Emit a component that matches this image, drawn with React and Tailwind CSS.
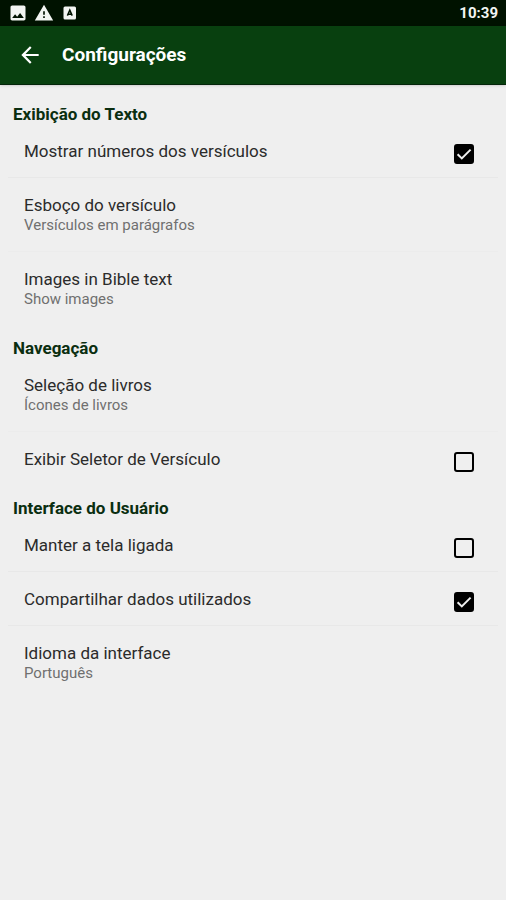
import React, { useState } from 'react';
import { MdImage, MdWarning, MdArrowBack } from 'react-icons/md';

const sections = [
  {
    title: 'Exibição do Texto',
    items: [
      { id: 'verseNumbers', label: 'Mostrar números dos versículos', type: 'checkbox' },
      { id: 'verseLayout', label: 'Esboço do versículo', value: 'Versículos em parágrafos' },
      { id: 'images', label: 'Images in Bible text', value: 'Show images' },
    ],
  },
  {
    title: 'Navegação',
    items: [
      { id: 'bookSelection', label: 'Seleção de livros', value: 'Ícones de livros' },
      { id: 'verseSelector', label: 'Exibir Seletor de Versículo', type: 'checkbox' },
    ],
  },
  {
    title: 'Interface do Usuário',
    items: [
      { id: 'keepScreenOn', label: 'Manter a tela ligada', type: 'checkbox' },
      { id: 'shareUsage', label: 'Compartilhar dados utilizados', type: 'checkbox' },
      { id: 'language', label: 'Idioma da interface', value: 'Português' },
    ],
  },
];

const StatusBar = () => (
  <div className="flex h-[26px] items-center justify-between bg-[#001200] px-2 text-[#f2f5f2]">
    <div className="flex items-center gap-[6px]">
      <MdImage className="size-5" />
      <MdWarning className="size-5" />
      <svg viewBox="0 0 20 20" className="size-5" aria-hidden="true">
        <rect x="3.5" y="3.5" width="12.5" height="13" rx="1.5" fill="currentColor" />
        <path d="M7.4 12.6 9.8 7.2 12.2 12.6M8.2 11.2H11.4" fill="none" stroke="#001200" strokeWidth="1.5" />
      </svg>
    </div>
    <span className="text-[15px] leading-5 font-bold">10:39</span>
  </div>
);

const CheckboxRow = ({ item, checked, onChange }) => (
  <label className="flex items-start justify-between border-b border-[#e8e8e8] pt-[17px] pr-6 pb-[13px] pl-4 group-last:border-transparent">
    <span className="text-[17px] leading-5 text-[#2b2b2b]">{item.label}</span>
    <span className="mt-[3px] grid size-5 shrink-0">
      <input
        type="checkbox"
        checked={checked}
        onChange={() => onChange(item.id)}
        className="col-start-1 row-start-1 size-5 appearance-none rounded-[3px] border-2 border-black checked:bg-black"
      />
      {checked && (
        <svg viewBox="0 0 20 20" className="pointer-events-none col-start-1 row-start-1 size-5" aria-hidden="true">
          <path d="M3.6 10.2 7.8 14.4 16.6 5.6" fill="none" stroke="#efefef" strokeWidth="2" />
        </svg>
      )}
    </span>
  </label>
);

const ValueRow = ({ item }) => (
  <button
    type="button"
    className="block w-full border-b border-[#ececec] pt-[17px] pr-6 pb-4 pl-4 text-left group-last:border-transparent"
  >
    <span className="block text-[17px] leading-5 text-[#2b2b2b]">{item.label}</span>
    <span className="block text-[15px] leading-5 text-[#707070]">{item.value}</span>
  </button>
);

const App = () => {
  const [checked, setChecked] = useState({
    verseNumbers: true,
    verseSelector: false,
    keepScreenOn: false,
    shareUsage: true,
  });

  const toggle = (id) => setChecked((prev) => ({ ...prev, [id]: !prev[id] }));

  return (
    <div className="min-h-screen bg-[#efefef] font-['Roboto',sans-serif]">
      <StatusBar />
      <header className="flex h-[59px] items-center gap-[19px] border-b border-[#04250a] bg-[#08400f] px-[17px] text-white shadow">
        <button type="button" aria-label="Voltar">
          <MdArrowBack className="size-[26px]" />
        </button>
        <h1 className="text-[19px] leading-6 font-bold">Configurações</h1>
      </header>

      <main className="px-2 pt-[7px]">
        {sections.map((section) => (
          <section key={section.title}>
            <h2 className="px-[5px] pt-3 text-[17px] leading-5 font-bold text-[#0a2e10]">{section.title}</h2>
            <ul>
              {section.items.map((item) => (
                <li key={item.id} className="group">
                  {item.type === 'checkbox' ? (
                    <CheckboxRow item={item} checked={checked[item.id]} onChange={toggle} />
                  ) : (
                    <ValueRow item={item} />
                  )}
                </li>
              ))}
            </ul>
          </section>
        ))}
      </main>
    </div>
  );
};

export default App;
